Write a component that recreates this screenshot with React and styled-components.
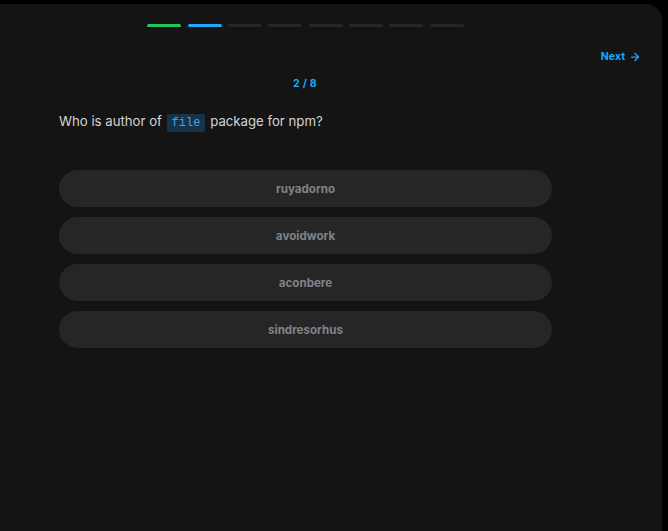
import styled, { createGlobalStyle } from 'styled-components'
import { ArrowRight } from 'lucide-react'

const GlobalStyle = createGlobalStyle`
  html, body {
    margin: 0;
    padding: 0;
    background: #000;
    height: 100%;
  }
  body {
    font-family: Inter, "Noto Sans", sans-serif;
  }
  #root {
    height: 100%;
  }
`

const Page = styled.div`
  height: 100%;
  padding-top: 4px;
  padding-right: 6px;
  box-sizing: border-box;
`

const Panel = styled.div`
  height: 100%;
  background: #141414;
  border-radius: 0 16px 0 0;
  display: flex;
  flex-direction: column;
`

const Column = styled.div`
  width: 610px;
  display: flex;
  flex-direction: column;
`

const Progress = styled.div`
  display: flex;
  justify-content: center;
  gap: 6.4px;
  margin-top: 20px;
  padding-left: 1px;
`

const Segment = styled.div`
  width: 34px;
  height: 3px;
  border-radius: 2px;
  background: ${p => p.$state === 'done' ? '#22c55e' : p.$state === 'current' ? '#1ea7fd' : '#262626'};
`

const TopBar = styled.div`
  display: flex;
  justify-content: flex-end;
  padding: 0 21px 0 0;
  margin-top: 23px;
`

const NextButton = styled.button`
  display: flex;
  align-items: center;
  gap: 4px;
  border: none;
  background: none;
  padding: 0;
  color: #1ea7fd;
  font-family: Inter, sans-serif;
  font-weight: 700;
  font-size: 10.5px;
  cursor: pointer;
`

const Counter = styled.div`
  text-align: center;
  color: #1ea7fd;
  font-weight: 700;
  font-size: 10.5px;
  margin-top: 14px;
  letter-spacing: 0.3px;
`

const Question = styled.p`
  margin: 21px 0 0 59px;
  color: #d4d4d4;
  font-size: 13.2px;
  line-height: 20px;
`

const Code = styled.code`
  font-family: "Liberation Mono", "DejaVu Sans Mono", monospace;
  font-size: 12px;
  color: #3aa7ec;
  background: #183247;
  padding: 2px 5px;
  border-radius: 2px;
  margin: 0 1px;
`

const Options = styled.div`
  display: flex;
  flex-direction: column;
  gap: 10px;
  margin: 37px 0 0 59px;
  width: 493px;
`

const Option = styled.button`
  height: 37px;
  border: none;
  border-radius: 19px;
  background: #262626;
  color: #80838a;
  font-family: Inter, sans-serif;
  font-weight: 700;
  font-size: 11.6px;
  cursor: pointer;
`

const answers = ['ruyadorno', 'avoidwork', 'aconbere', 'sindresorhus']

const App = () => {
  const steps = ['done', 'current', '', '', '', '', '', '']

  return (
    <>
      <GlobalStyle />
      <Page>
        <Panel>
          <Column>
            <Progress>
              {steps.map((s, i) => (
                <Segment key={i} $state={s} />
              ))}
            </Progress>
          </Column>
          <TopBar>
            <NextButton>
              Next <ArrowRight size={12} strokeWidth={2.5} />
            </NextButton>
          </TopBar>
          <Column>
            <Counter>2 / 8</Counter>
            <Question>
              Who is author of <Code>file</Code> package for npm?
            </Question>
            <Options>
              {answers.map(a => (
                <Option key={a}>{a}</Option>
              ))}
            </Options>
          </Column>
        </Panel>
      </Page>
    </>
  )
}

export default App
